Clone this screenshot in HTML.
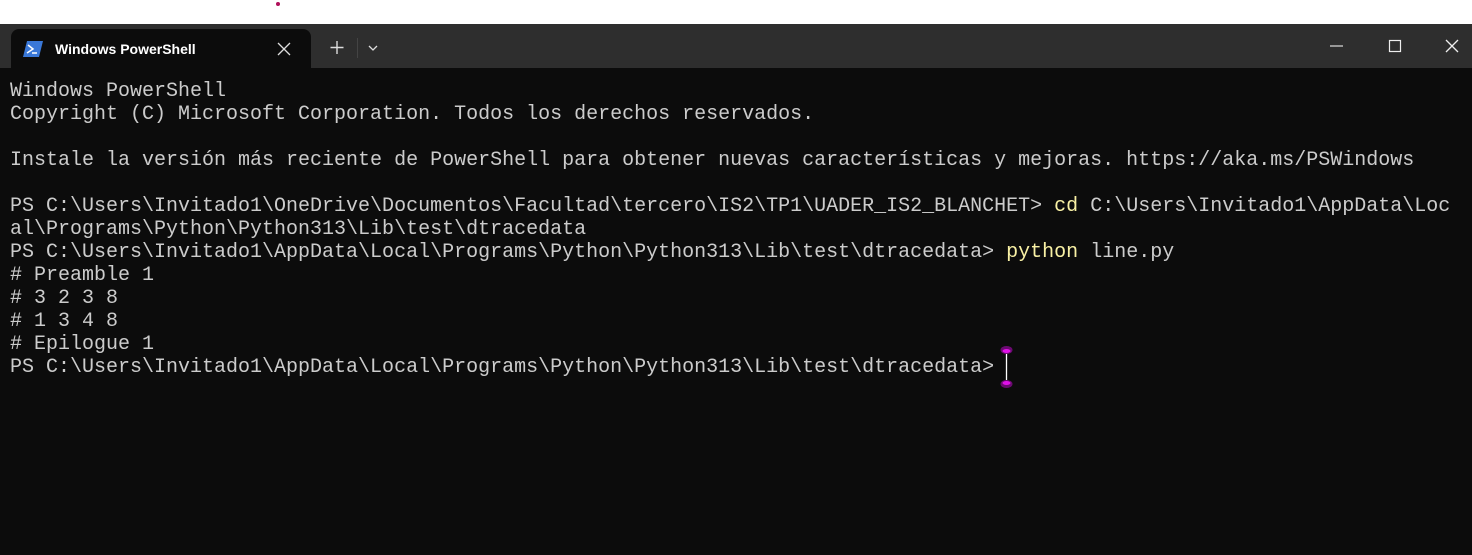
<!DOCTYPE html>
<html><head><style>
*{margin:0;padding:0;box-sizing:border-box}
body{width:1472px;height:555px;background:#0c0c0c;overflow:hidden;position:relative;font-family:"Liberation Sans",sans-serif}
#top{position:absolute;left:0;top:0;width:1472px;height:24px;background:#fff}
#bar{position:absolute;left:0;top:24px;width:1472px;height:44px;background:#2e2e2e}
#tab{position:absolute;left:11px;top:29px;width:300px;height:39px;background:#0c0c0c;border-radius:8px 8px 0 0}
#tab .t{position:absolute;left:44px;top:12px;color:#fff;font-size:14px;font-weight:bold}
#term{position:absolute;left:10px;top:80px;font-family:"Liberation Mono",monospace;font-size:20px;line-height:23px;color:#cccccc;white-space:pre}
.y{color:#f9f1a5}
</style></head><body>
<div id="top"><div style="position:absolute;left:276px;top:2px;width:4px;height:4px;border-radius:2px;background:#b0105a"></div></div>
<div id="bar">
<svg style="position:absolute;left:1330px;top:12px" width="140" height="20"><line x1="0" y1="10" x2="13" y2="10" stroke="#ddd" stroke-width="1.2"/><rect x="59.5" y="4.5" width="11" height="11" fill="none" stroke="#eee" stroke-width="1.2"/><path d="M116 4L128 16M128 4L116 16" stroke="#eee" stroke-width="1.3"/></svg>
<svg style="position:absolute;left:328px;top:14px" width="60" height="20"><path d="M9 3v13M2.5 9.5h13" stroke="#ddd" stroke-width="1.4"/><line x1="29.5" y1="0" x2="29.5" y2="20" stroke="#444"/><path d="M41 8l4 4 4-4" fill="none" stroke="#ddd" stroke-width="1.3"/></svg>
</div>
<div id="tab">
<svg style="position:absolute;left:12px;top:12px" width="20" height="16"><path d="M4 0h16l-4 16H0z" fill="#3a78d8"/><path d="M5 4l5 4-6 4M9 12h5" fill="none" stroke="#fff" stroke-width="1.5"/></svg>
<div class="t">Windows PowerShell</div>
<svg style="position:absolute;left:266px;top:13px" width="14" height="14"><path d="M1 1l12 12M13 1L1 13" stroke="#ddd" stroke-width="1.3"/></svg>
</div>
<div id="term">Windows PowerShell
Copyright (C) Microsoft Corporation. Todos los derechos reservados.

Instale la versión más reciente de PowerShell para obtener nuevas características y mejoras. https://aka.ms/PSWindows

PS C:\Users\Invitado1\OneDrive\Documentos\Facultad\tercero\IS2\TP1\UADER_IS2_BLANCHET> <span class="y">cd</span> C:\Users\Invitado1\AppData\Loc
al\Programs\Python\Python313\Lib\test\dtracedata
PS C:\Users\Invitado1\AppData\Local\Programs\Python\Python313\Lib\test\dtracedata> <span class="y">python</span> line.py
# Preamble 1
# 3 2 3 8
# 1 3 4 8
# Epilogue 1
PS C:\Users\Invitado1\AppData\Local\Programs\Python\Python313\Lib\test\dtracedata></div>
<svg style="position:absolute;left:998px;top:344px" width="18" height="46"><line x1="8.5" y1="6" x2="8.5" y2="38" stroke="#fff" stroke-width="1.3"/><ellipse cx="8.5" cy="6" rx="6" ry="4" fill="#6a0a70"/><ellipse cx="8.5" cy="7" rx="4" ry="2" fill="#e010e8"/><ellipse cx="8.5" cy="40" rx="6" ry="4" fill="#6a0a70"/><ellipse cx="8.5" cy="39" rx="4" ry="2" fill="#e010e8"/></svg>
</body></html>
